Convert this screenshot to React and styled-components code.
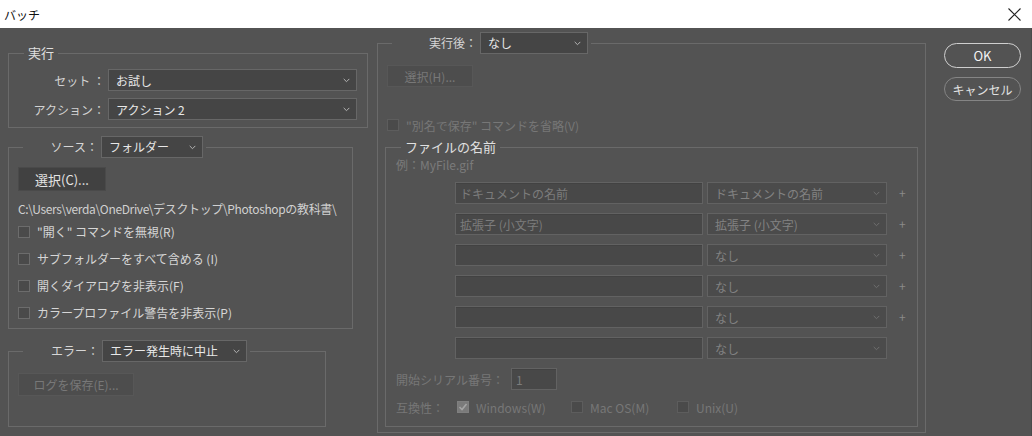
import React from "react";
import styled, { createGlobalStyle } from "styled-components";

const GlobalStyle = createGlobalStyle`
  html, body {
    margin: 0;
    padding: 0;
    background: #535353;
  }
  * {
    box-sizing: border-box;
  }
`;

const Window = styled.div`
  width: 1032px;
  height: 436px;
  display: flex;
  flex-direction: column;
  overflow: hidden;
  font-family: "Noto Sans CJK JP", "Noto Sans", sans-serif;
  font-size: 12px;
  color: #d9d9d9;
`;

const TitleBar = styled.div`
  height: 28px;
  flex: none;
  background: #ffffff;
  display: flex;
  align-items: center;
  justify-content: space-between;
  padding: 0 11px 0 4px;
`;

const Title = styled.span`
  color: #111;
  font-size: 12px;
`;

const Body = styled.div`
  flex: 1;
  background: #535353;
  display: flex;
  align-items: flex-start;
  padding-left: 8px;
  border-right: 1px solid #4a4a4a;
`;

const LeftCol = styled.div`
  width: 360px;
  display: flex;
  flex-direction: column;
`;

const Group = styled.fieldset`
  margin: ${(p) => p.$mt || 0}px 0 0 ${(p) => p.$ml || 0}px;
  padding: 0;
  min-width: 0;
  width: ${(p) => p.$w}px;
  border: 1px solid #6a6a6a;
`;

const Legend = styled.legend`
  margin-left: ${(p) => p.$ml}px;
  padding: 0 ${(p) => (p.$pad ? 4 : 3)}px 0 ${(p) => (p.$pad ? 4 : 0)}px;
  font-size: 13px;
  line-height: 18px;
  color: #e0e0e0;
  display: flex;
  align-items: center;
  gap: 3px;
`;

const LegendLabel = styled.span`
  width: ${(p) => p.$w}px;
  text-align: right;
  font-size: 12px;
  color: #d6d6d6;
  white-space: nowrap;
`;

const Inner = styled.div`
  padding: ${(p) => p.$pad};
  display: flex;
  flex-direction: column;
  align-items: flex-start;
`;

const FieldGrid = styled.div`
  display: grid;
  grid-template-columns: 96px 249px;
  column-gap: 3px;
  row-gap: 7px;
  align-items: center;
`;

const FieldLabel = styled.span`
  text-align: right;
  color: #d2d2d2;
  white-space: nowrap;
`;

const SelectBox = styled.div`
  width: ${(p) => p.$w}px;
  height: 22px;
  display: flex;
  align-items: center;
  justify-content: space-between;
  padding: 0 6px 0 7px;
  background: ${(p) => (p.$disabled ? "#4b4b4b" : "#454545")};
  border: 1px solid ${(p) => (p.$disabled ? "#626262" : "#676767")};
  color: ${(p) => (p.$disabled ? "#828282" : "#e8e8e8")};
  font-size: 12px;
  white-space: nowrap;
`;

const Chevron = ({ color }) => (
  <svg width="7" height="5" viewBox="0 0 7 5">
    <path d="M0.7 0.9 L3.5 3.7 L6.3 0.9" fill="none" stroke={color} strokeWidth="1" />
  </svg>
);

function Select({ w, children, disabled }) {
  return (
    <SelectBox $w={w} $disabled={disabled}>
      <span>{children}</span>
      <Chevron color={disabled ? "#6f6f6f" : "#b4b4b4"} />
    </SelectBox>
  );
}

const Button = styled.div`
  width: ${(p) => p.$w}px;
  height: ${(p) => p.$h || 24}px;
  margin-top: ${(p) => p.$mt || 0}px;
  margin-left: ${(p) => p.$ml || 0}px;
  display: flex;
  align-items: center;
  justify-content: center;
  background: ${(p) => (p.$disabled ? "#4d4d4d" : "#414141")};
  border: 1px solid ${(p) => (p.$disabled ? "#575757" : "#4a4a4a")};
  color: ${(p) => (p.$disabled ? "#787878" : "#e4e4e4")};
  font-size: ${(p) => (p.$disabled ? 12 : 13)}px;
  white-space: nowrap;
`;

const PathText = styled.div`
  margin-top: 9px;
  line-height: 18px;
  color: #d0d0d0;
  white-space: nowrap;
  letter-spacing: -0.35px;
`;

const CheckRow = styled.div`
  height: ${(p) => p.$h || 27}px;
  margin-top: ${(p) => p.$mt || 0}px;
  margin-left: ${(p) => p.$ml || 0}px;
  display: flex;
  align-items: center;
  gap: 7px;
  color: ${(p) => (p.$disabled ? "#777777" : "#d6d6d6")};
  white-space: nowrap;
`;

const Box = styled.span`
  width: 12px;
  height: 12px;
  flex: none;
  display: flex;
  align-items: center;
  justify-content: center;
  background: ${(p) => (p.$checked ? "#7a7a7a" : "#4a4a4a")};
  border: 1px solid ${(p) => (p.$checked ? "#7f7f7f" : p.$disabled ? "#5d5d5d" : "#6c6c6c")};
`;

function Check({ checked, disabled }) {
  return (
    <Box $checked={checked} $disabled={disabled}>
      {checked && (
        <svg width="10" height="10" viewBox="0 0 10 10">
          <path d="M1.5 5 L4 7.5 L8.5 2" fill="none" stroke="#a4a4a4" strokeWidth="1.6" />
        </svg>
      )}
    </Box>
  );
}

const RightPanel = styled(Group)`
  margin-top: 4px;
  margin-left: 9px;
`;

const Example = styled.div`
  line-height: 18px;
  color: #7b7b7b;
`;

const NameGrid = styled.div`
  margin: 8px 0 0 59px;
  display: grid;
  grid-template-columns: 248px 180px 14px;
  grid-auto-rows: 22px;
  column-gap: 4px;
  row-gap: 9px;
  align-items: center;
`;

const TextField = styled.div`
  width: ${(p) => p.$w || 248}px;
  height: 22px;
  display: flex;
  align-items: center;
  padding-left: 4px;
  background: #484848;
  border: 1px solid #626262;
  box-shadow: inset 0 1px 0 #424242;
  color: #7c7c7c;
  white-space: nowrap;
`;

const Plus = styled.span`
  margin-left: 8px;
  color: #8a8a8a;
  font-size: 12px;
  line-height: 1;
`;

const InlineRow = styled.div`
  display: flex;
  align-items: center;
  height: ${(p) => p.$h}px;
  margin-top: ${(p) => p.$mt}px;
  color: #777;
  white-space: nowrap;
`;

const InlineLabel = styled.span`
  width: ${(p) => p.$w}px;
  flex: none;
`;

const CompatItem = styled.span`
  width: ${(p) => p.$w}px;
  display: flex;
  align-items: center;
  gap: 7px;
  color: #777;
`;

const ButtonCol = styled.div`
  margin: 15px 0 0 18px;
  width: 77px;
  display: flex;
  flex-direction: column;
  gap: 9px;
`;

const PillButton = styled.div`
  height: ${(p) => (p.$primary ? 25 : 24)}px;
  border-radius: 13px;
  display: flex;
  align-items: center;
  justify-content: center;
  border: ${(p) => (p.$primary ? "1.5px solid #cfcfcf" : "1px solid #858585")};
  color: ${(p) => (p.$primary ? "#f4f4f4" : "#e2e2e2")};
  font-size: ${(p) => (p.$primary ? 13 : 12)}px;
`;

const nameRows = [
  ["ドキュメントの名前", "ドキュメントの名前", true],
  ["拡張子 (小文字)", "拡張子 (小文字)", true],
  ["", "なし", true],
  ["", "なし", true],
  ["", "なし", true],
  ["", "なし", false],
];

export default function App() {
  return (
    <>
      <GlobalStyle />
      <Window>
        <TitleBar>
          <Title>バッチ</Title>
          <svg width="13" height="13" viewBox="0 0 13 13">
            <path d="M0.5 0.5 L12.5 12.5 M12.5 0.5 L0.5 12.5" stroke="#222" strokeWidth="1.1" />
          </svg>
        </TitleBar>
        <Body>
          <LeftCol>
            <Group $w={360} $mt={16}>
              <Legend $ml={15} $pad>実行</Legend>
              <Inner $pad="7px 0 7px 0">
                <FieldGrid>
                  <FieldLabel>セット ：</FieldLabel>
                  <Select w={249}>お試し</Select>
                  <FieldLabel>アクション：</FieldLabel>
                  <Select w={249}>アクション 2</Select>
                </FieldGrid>
              </Inner>
            </Group>

            <Group $w={345} $mt={8}>
              <Legend $ml={14}>
                <LegendLabel $w={75}>ソース：</LegendLabel>
                <Select w={102}>フォルダー</Select>
              </Legend>
              <Inner $pad="9px 0 2px 9px">
                <Button $w={88}>選択(C)...</Button>
                <PathText>{"C:\\Users\\verda\\OneDrive\\デスクトップ\\Photoshopの教科書\\"}</PathText>
                <CheckRow><Check />"開く" コマンドを無視(R)</CheckRow>
                <CheckRow><Check />サブフォルダーをすべて含める (I)</CheckRow>
                <CheckRow><Check />開くダイアログを非表示(F)</CheckRow>
                <CheckRow><Check />カラープロファイル警告を非表示(P)</CheckRow>
              </Inner>
            </Group>

            <Group $w={318} $mt={11}>
              <Legend $ml={14}>
                <LegendLabel $w={76}>エラー：</LegendLabel>
                <Select w={145}>エラー発生時に中止</Select>
              </Legend>
              <Inner $pad="11px 0 30px 9px">
                <Button $w={116} $h={23} $disabled>ログを保存(E)...</Button>
              </Inner>
            </Group>
          </LeftCol>

          <RightPanel $w={549}>
            <Legend $ml={14}>
              <LegendLabel $w={85}>実行後：</LegendLabel>
              <Select w={108}>なし</Select>
            </Legend>
            <Inner $pad="11px 7px 5px 7px">
              <Button $w={86} $h={22} $ml={2} $disabled>選択(H)...</Button>
              <CheckRow $h={18} $mt={29} $ml={2} $disabled>
                <Check disabled />"別名で保存" コマンドを省略(V)
              </CheckRow>
              <Group $w={533} $mt={4}>
                <Legend $ml={15} $pad>ファイルの名前</Legend>
                <Inner $pad="0 0 10px 10px">
                  <Example>例：MyFile.gif</Example>
                  <NameGrid>
                    {nameRows.map(([text, sel, plus], i) => (
                      <React.Fragment key={i}>
                        <TextField>{text}</TextField>
                        <Select w={180} disabled>{sel}</Select>
                        {plus ? <Plus>+</Plus> : <span />}
                      </React.Fragment>
                    ))}
                  </NameGrid>
                  <InlineRow $h={22} $mt={9}>
                    <InlineLabel $w={115}>開始シリアル番号：</InlineLabel>
                    <TextField $w={46}>1</TextField>
                  </InlineRow>
                  <InlineRow $h={18} $mt={8}>
                    <InlineLabel $w={61}>互換性：</InlineLabel>
                    <CompatItem $w={114}><Check checked />Windows(W)</CompatItem>
                    <CompatItem $w={106}><Check disabled />Mac OS(M)</CompatItem>
                    <CompatItem $w={80}><Check disabled />Unix(U)</CompatItem>
                  </InlineRow>
                </Inner>
              </Group>
            </Inner>
          </RightPanel>

          <ButtonCol>
            <PillButton $primary>OK</PillButton>
            <PillButton>キャンセル</PillButton>
          </ButtonCol>
        </Body>
      </Window>
    </>
  );
}
